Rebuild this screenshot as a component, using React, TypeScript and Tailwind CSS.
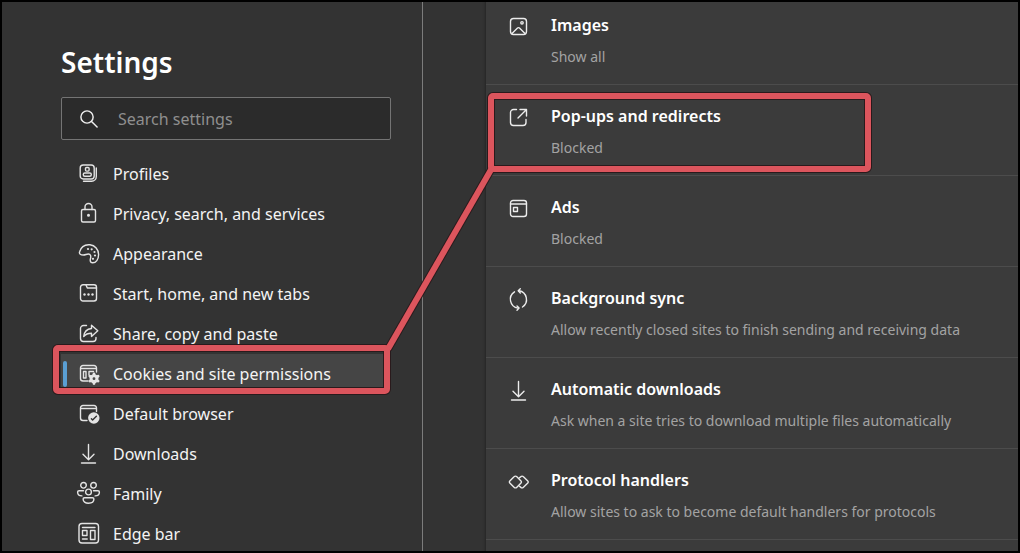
import type { ReactNode } from "react";

interface IconProps {
  children: ReactNode
  className?: string
}

function Icon({ children, className = "size-5" }: IconProps) {
  return (
    <svg
      viewBox="0 0 20 20"
      fill="none"
      stroke="currentColor"
      strokeWidth="1.4"
      strokeLinecap="round"
      strokeLinejoin="round"
      aria-hidden="true"
      className={`shrink-0 overflow-visible ${className}`}
    >
      {children}
    </svg>
  )
}

const downloadIcon = (
  <Icon>
    <path d="M9.500 .5v15M4 10.200l5.500 5.500 5.500-5.500M2.500 19h14" />
  </Icon>
)

const navItems = [
  {
    label: "Profiles",
    icon: (
      <Icon>
        <rect x="1.200" y="1" width="14" height="14" rx="3" />
        <path d="M17.300 4v8.500a4.700 4.700 0 0 1-4.700 4.700H4.500" />
        <rect x="6.500" y="3.500" width="3.600" height="3.600" rx="1" />
        <rect x="4.300" y="9" width="8" height="3.300" rx="1.500" />
      </Icon>
    )
  },
  {
    label: "Privacy, search, and services",
    icon: (
      <Icon>
        <rect x="2.500" y="5.500" width="14" height="12.500" rx="1.500" />
        <path d="M6 5.500V3a3.500 3.500 0 0 1 7 0v2.500" />
        <circle cx="9.500" cy="11.300" r=".8" fill="currentColor" />
      </Icon>
    )
  },
  {
    label: "Appearance",
    icon: (
      <Icon>
        <path d="M.6 7.800C2 3 6 .3 11 .8c5 .6 8.600 4.800 8.600 9.800 0 4.800-2.600 8.400-6.200 8.200-2.400-.2-2.400-2.400-1.900-4.300.6-2.300.3-4.500-2.200-4.500-1.700 0-3 1-4.800 1C1.600 11-.1 9.900.6 7.800Z" />
        <g fill="currentColor" stroke="none">
          <circle cx="9" cy="5" r="1.100" />
          <circle cx="12.700" cy="5.300" r="1.100" />
          <circle cx="15.500" cy="8" r="1.100" />
          <circle cx="16" cy="11.500" r="1.100" />
          <circle cx="14" cy="14.800" r="1.100" />
        </g>
      </Icon>
    )
  },
  {
    label: "Start, home, and new tabs",
    icon: (
      <Icon>
        <rect x="1.500" y=".7" width="16" height="16.300" rx="2.500" />
        <path d="M7 1l1.300 3h9.200" />
        <g fill="currentColor" stroke="none">
          <circle cx="5.500" cy="10.500" r="1.200" />
          <circle cx="9.500" cy="10.500" r="1.200" />
          <circle cx="13.500" cy="10.500" r="1.200" />
        </g>
      </Icon>
    )
  },
  {
    label: "Share, copy and paste",
    icon: (
      <Icon>
        <path d="M7.500 1.500H4.500a3 3 0 0 0-3 3v10a3 3 0 0 0 3 3h9.500a3 3 0 0 0 3-3V13.500" />
        <path d="M12.500 1.200 18.800 6.800l-6.300 5.600V9.300c-3.700 0-6 1-7.800 3.200.5-4.500 3.300-7.500 7.800-8V1.200Z" />
      </Icon>
    )
  },
  {
    label: "Cookies and site permissions",
    icon: (
      <Icon>
        <path d="M17.500 8V4A2.500 2.500 0 0 0 15 1.500H4A2.500 2.500 0 0 0 1.500 4v10.500A2.500 2.500 0 0 0 4 17h5M1.500 4.500h16" />
        <path d="M4.500 7.500h2.500v6.500H4.500ZM10 11V7.500h4.500" />
        <path d="M15 9.900v9.600M10.900 12.300l8.200 4.800M19.100 12.300l-8.200 4.800" strokeWidth="2.800" />
        <circle cx="15" cy="14.700" r="3.800" fill="currentColor" />
        <circle cx="15" cy="14.700" r="1.400" fill="#454545" stroke="none" />
      </Icon>
    )
  },
  {
    label: "Default browser",
    icon: (
      <Icon>
        <path d="M17.500 7.500V4A2.500 2.500 0 0 0 15 1.500H4A2.500 2.500 0 0 0 1.500 4v10A2.500 2.500 0 0 0 4 16.500h4M1.500 4.500h16" />
        <circle cx="14.800" cy="14" r="5.700" fill="currentColor" stroke="none" />
        <path d="m12.400 14.800 1.200 1.200 3.800-3.800" stroke="#333" />
      </Icon>
    )
  },
  { label: "Downloads", icon: downloadIcon },
  {
    label: "Family",
    icon: (
      <Icon>
        <circle cx="4.500" cy="1.300" r="2.800" />
        <circle cx="14.500" cy="1.300" r="2.800" />
        <circle cx="9.500" cy="8" r="2.900" />
        <path d="M4.500 6.800H.1c-1 0-1.500.4-1.500 1.200 0 2.600 1.800 3.900 4.300 3.900M14.500 6.800h4.400c1 0 1.500.4 1.500 1.200 0 2.600-1.800 3.900-4.300 3.900" />
        <path d="M5.500 13.700h8c.9 0 1.400.5 1.400 1.300 0 2.700-2.200 4.200-5.400 4.200s-5.400-1.500-5.400-4.200c0-.8.500-1.300 1.400-1.300Z" />
      </Icon>
    )
  },
  {
    label: "Edge bar",
    icon: (
      <Icon>
        <rect x="0" y="-.5" width="19.500" height="19.500" rx="3" />
        <rect x="3.500" y="6.500" width="4.500" height="5" />
        <rect x="11.500" y="6.500" width="4.500" height="9" />
        <path d="M3.500 3.500H16M3.500 15h4.700" />
      </Icon>
    )
  }
]

const permissions = [
  {
    title: "Images",
    description: "Show all",
    icon: (
      <Icon>
        <rect x="1.500" y="1.500" width="16" height="16" rx="3" />
        <circle cx="13" cy="5.800" r="1.200" />
        <path d="m3 16.500 5.500-5.500a1.400 1.400 0 0 1 2 0l5.500 5.500" />
      </Icon>
    )
  },
  {
    title: "Pop-ups and redirects",
    description: "Blocked",
    icon: (
      <Icon>
        <path d="M7.500 1.500h-3a3 3 0 0 0-3 3v10a3 3 0 0 0 3 3h9.500a3 3 0 0 0 3-3v-3M11 1.500h6.500V8M17.500 1.500 9 10" />
      </Icon>
    )
  },
  {
    title: "Ads",
    description: "Blocked",
    icon: (
      <Icon>
        <rect x="1.500" y="1.500" width="16" height="16" rx="2.500" />
        <path d="M1.500 5h16" />
        <rect x="4.500" y="8.500" width="4" height="4" />
      </Icon>
    )
  },
  {
    title: "Background sync",
    description: "Allow recently closed sites to finish sending and receiving data",
    icon: (
      <Icon>
        <path d="M5.500 1.800A8.900 8.900 0 0 0 9 18.100M13.500 17A8.900 8.900 0 0 0 10 .8" />
        <path d="M11.300-1.200 9.200.8l2.100 2.100M8 16l2.100 2.100L8 20.200" />
      </Icon>
    )
  },
  {
    title: "Automatic downloads",
    description: "Ask when a site tries to download multiple files automatically",
    icon: downloadIcon
  },
  {
    title: "Protocol handlers",
    description: "Allow sites to ask to become default handlers for protocols",
    icon: (
      <Icon>
        <path d="M5.300 4.600.8 9a1.400 1.400 0 0 0 0 2l4.500 4.400a1.600 1.600 0 0 0 2.300 0L12 11a1.400 1.400 0 0 0 0-2L7.600 4.600a1.600 1.600 0 0 0-2.300 0Z" />
        <path d="m10.500 5.800 1.400-1.200a1.600 1.600 0 0 1 2.300 0L18.800 9a1.400 1.400 0 0 1 0 2l-4.600 4.400a1.600 1.600 0 0 1-2.300 0l-1.400-1.200" />
      </Icon>
    )
  }
]

function Sidebar() {
  return (
    <aside className="w-[421px] shrink-0 border-r border-[#7c7c7c] pl-[59px] pr-[31px]">
      <h1 className="mt-10 text-[28px] leading-10 font-semibold text-white">Settings</h1>

      <label className="mt-[15px] flex h-[43px] items-center gap-5 rounded-xs border border-[#747474] bg-[#2b2b2b] pl-[18px] text-[#efefef]">
        <Icon className="size-[18px]">
          <circle cx="7.800" cy="7.800" r="6.800" strokeWidth="1.600" />
          <path d="m12.800 12.800 6.200 6.200" strokeWidth="1.600" />
        </Icon>
        <input
          type="search"
          aria-label="Search settings"
          placeholder="Search settings"
          className="min-w-0 flex-1 text-base outline-none placeholder:text-[#8f8f8f]"
        />
      </label>

      <nav className="mt-3.5 pr-1">
        {navItems.map((item) => {
          const active = item.label === "Cookies and site permissions"

          return (
            <a
              key={item.label}
              href="#"
              aria-current={active ? "page" : undefined}
              className="flex h-10 items-center aria-[current=page]:bg-[#454545]"
            >
              <span className={active ? "ml-0.5 h-[26px] w-1 rounded-xs bg-[#5a9fd4]" : "ml-0.5 w-1"} />
              <span className="ml-3 flex text-[#e4e4e4]">{item.icon}</span>
              <span className="ml-3.5 text-base whitespace-nowrap text-[#f4f4f4]">{item.label}</span>
            </a>
          )
        })}
      </nav>
    </aside>
  )
}

function PermissionList() {
  return (
    <main className="min-w-0 flex-1 pl-[63px]">
      <ul className="-mt-2 h-full min-h-[600px] bg-[#3b3b3b] shadow-[0_0_3px_#1c1c1c]">
        {permissions.map((item) => (
          <li key={item.title} className="flex gap-[22px] border-b border-[#4c4c4c] pt-[19px] pb-[17px] pl-[23px]">
            <span className="mt-1 flex text-[#ececec]">{item.icon}</span>
            <div className="min-w-0">
              <h2 className="text-base leading-6 font-semibold text-white">{item.title}</h2>
              <p className="mt-2.5 text-sm leading-5 whitespace-nowrap text-[#a3a3a3]">{item.description}</p>
            </div>
          </li>
        ))}
      </ul>
    </main>
  )
}

function Highlights() {
  const shapes = (
    <>
      <rect x="54" y="346" width="331" height="43" rx="2" />
      <rect x="489" y="94" width="377" height="73" rx="2" />
      <path d="M386 347 490 166" />
    </>
  )

  return (
    <svg className="pointer-events-none absolute inset-0 size-full" fill="none" aria-hidden="true">
      <g stroke="#2a1a1c" strokeWidth="8">{shapes}</g>
      <g stroke="#dc555d" strokeWidth="6">{shapes}</g>
    </svg>
  )
}

export default function App() {
  return (
    <div className="relative flex h-screen overflow-hidden border-2 border-black bg-[#333] font-['Noto_Sans','Open_Sans',sans-serif]">
      <Sidebar />
      <PermissionList />
      <Highlights />
    </div>
  )
}
